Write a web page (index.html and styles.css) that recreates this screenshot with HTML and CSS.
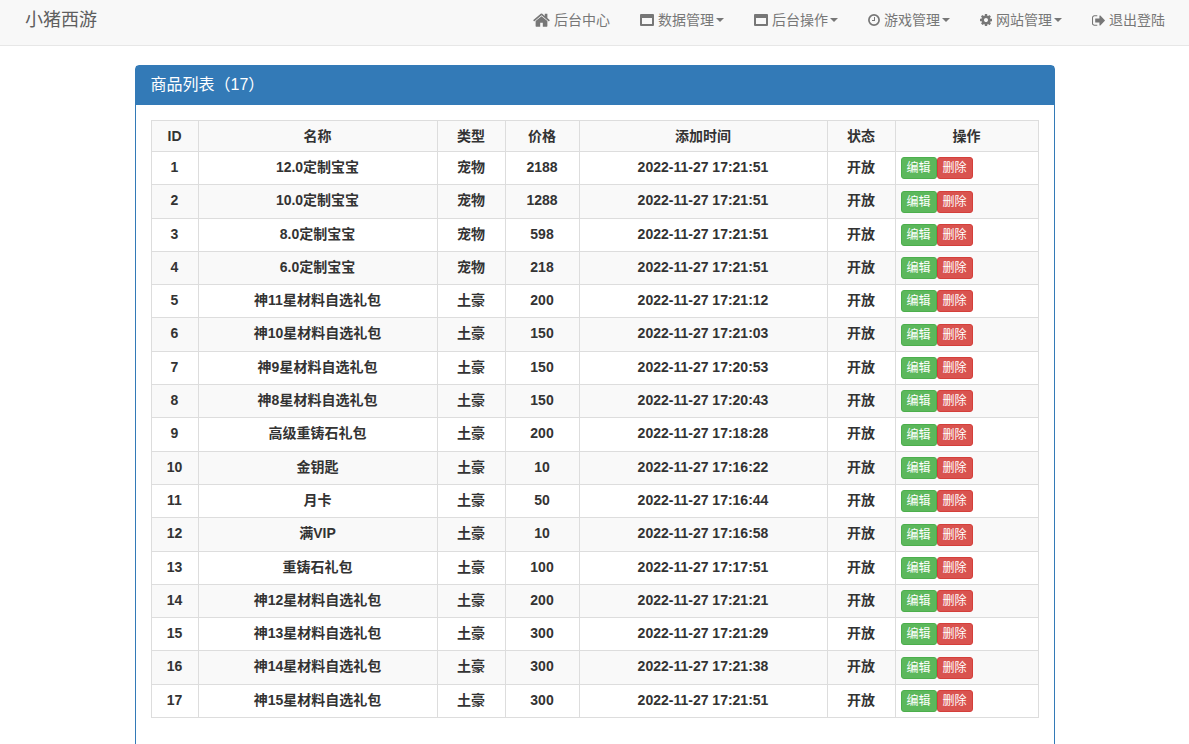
FILE: index.html
```html
<!DOCTYPE html>
<html lang="zh-CN">
<head>
<meta charset="utf-8">
<meta name="viewport" content="width=device-width, initial-scale=1">
<title>小猪西游</title>
<link rel="stylesheet" href="styles.css">
</head>
<body>
<svg class="sprite" aria-hidden="true">
  <symbol id="home" viewBox="0 224 1664 1312"><path d="M1408 992v480q0 26-19 45t-45 19h-384v-384h-256v384h-384q-26 0-45-19t-19-45v-480q0-1 .5-3t.5-3l575-474 575 474q1 2 1 6zm223-69l-62 74q-8 9-21 11h-3q-13 0-21-7l-692-577-692 577q-12 8-24 7-13-2-21-11l-62-74q-8-10-7-23.5t11-21.5l719-599q32-26 76-26t76 26l244 204v-195q0-14 9-23t23-9h192q14 0 23 9t9 23v408l219 182q10 8 11 21.5t-7 23.5z"/></symbol>
  <symbol id="window" viewBox="0 0 14 12"><path fill-rule="evenodd" d="M1 0h12q1 0 1 1v10q0 1-1 1h-12q-1 0-1-1v-10q0-1 1-1zM2 4v6h10v-6z"/></symbol>
  <symbol id="clock" viewBox="0 0 12 12"><circle cx="6" cy="6" r="5.1" fill="none" stroke="currentColor" stroke-width="1.7"/><path d="M6 3h1v4h-3v-1h2z"/></symbol>
  <symbol id="cog" viewBox="128 128 1536 1536"><path d="M1152 896q0-106-75-181t-181-75-181 75-75 181 75 181 181 75 181-75 75-181zm512-109v222q0 12-8 23t-20 13l-185 28q-19 54-39 91 35 50 107 138 10 12 10 25t-9 23q-27 37-99 108t-94 71q-12 0-26-9l-138-108q-44 23-91 38-16 136-29 186-7 28-36 28h-222q-14 0-24.500-8.500t-11.500-21.500l-28-184q-49-16-90-37l-141 107q-10 9-25 9-14 0-25-11-126-114-165-168-7-10-7-23 0-12 8-23 15-21 51-66.500t54-70.500q-27-50-41-99l-183-27q-13-2-21-12.500t-8-23.500v-222q0-12 8-23t19-13l186-28q14-46 39-92-40-57-107-138-10-12-10-24 0-10 9-23 26-36 98.500-107.500t94.500-71.500q13 0 26 10l138 107q44-23 91-38 16-136 29-186 7-28 36-28h222q14 0 24.500 8.500t11.500 21.500l28 184q49 16 90 37l142-107q9-9 24-9 13 0 25 10 129 119 165 170 7 8 7 22 0 12-8 23-15 21-51 66.500t-54 70.500q26 50 41 98l183 28q13 2 21 12.500t8 23.500z"/></symbol>
  <symbol id="signout" viewBox="64 256 1568 1280"><path d="M704 1440q0 4 1 20t.5 26.500-3 23.500-10 19.500-20.500 6.500h-320q-119 0-203.500-84.500t-84.500-203.500v-704q0-119 84.500-203.500t203.500-84.500h320q13 0 22.500 9.500t9.500 22.500q0 4 1 20t.5 26.500-3 23.500-10 19.500-20.500 6.500h-320q-66 0-113 47t-47 113v704q0 66 47 113t113 47h312l11.500 1 11.500 3 8 5.500 7 9 2 13.500zm928-544q0 26-19 45l-544 544q-19 19-45 19t-45-19-19-45v-288h-448q-26 0-45-19t-19-45v-384q0-26 19-45t45-19h448v-288q0-26 19-45t45-19 45 19l544 544q19 19 19 45z"/></symbol>
</svg>

<nav class="navbar">
  <a class="brand" href="#">小猪西游</a>
  <ul class="nav">
    <li><a href="#"><svg class="icon icon-lg"><use href="#home"/></svg>后台中心</a></li>
    <li><a href="#"><svg class="icon icon-window"><use href="#window"/></svg><span class="toggle">数据管理</span></a></li>
    <li><a href="#"><svg class="icon icon-window"><use href="#window"/></svg><span class="toggle">后台操作</span></a></li>
    <li><a href="#"><svg class="icon"><use href="#clock"/></svg><span class="toggle">游戏管理</span></a></li>
    <li><a href="#"><svg class="icon"><use href="#cog"/></svg><span class="toggle">网站管理</span></a></li>
    <li><a href="#"><svg class="icon icon-exit"><use href="#signout"/></svg>退出登陆</a></li>
  </ul>
</nav>

<main class="panel">
  <h1 class="panel-heading">商品列表（17）</h1>
  <div class="panel-body">
    <table class="table">
      <colgroup><col class="c-id"><col class="c-name"><col class="c-tag"><col class="c-price"><col class="c-time"><col class="c-tag"><col></colgroup>
      <thead>
        <tr><th>ID</th><th>名称</th><th>类型</th><th>价格</th><th>添加时间</th><th>状态</th><th>操作</th></tr>
      </thead>
      <tbody>
        <tr><th>1</th><th>12.0定制宝宝</th><th>宠物</th><th>2188</th><th>2022-11-27 17:21:51</th><th>开放</th><td><button class="btn edit">编辑</button><button class="btn del">删除</button></td></tr>
        <tr><th>2</th><th>10.0定制宝宝</th><th>宠物</th><th>1288</th><th>2022-11-27 17:21:51</th><th>开放</th><td><button class="btn edit">编辑</button><button class="btn del">删除</button></td></tr>
        <tr><th>3</th><th>8.0定制宝宝</th><th>宠物</th><th>598</th><th>2022-11-27 17:21:51</th><th>开放</th><td><button class="btn edit">编辑</button><button class="btn del">删除</button></td></tr>
        <tr><th>4</th><th>6.0定制宝宝</th><th>宠物</th><th>218</th><th>2022-11-27 17:21:51</th><th>开放</th><td><button class="btn edit">编辑</button><button class="btn del">删除</button></td></tr>
        <tr><th>5</th><th>神11星材料自选礼包</th><th>土豪</th><th>200</th><th>2022-11-27 17:21:12</th><th>开放</th><td><button class="btn edit">编辑</button><button class="btn del">删除</button></td></tr>
        <tr><th>6</th><th>神10星材料自选礼包</th><th>土豪</th><th>150</th><th>2022-11-27 17:21:03</th><th>开放</th><td><button class="btn edit">编辑</button><button class="btn del">删除</button></td></tr>
        <tr><th>7</th><th>神9星材料自选礼包</th><th>土豪</th><th>150</th><th>2022-11-27 17:20:53</th><th>开放</th><td><button class="btn edit">编辑</button><button class="btn del">删除</button></td></tr>
        <tr><th>8</th><th>神8星材料自选礼包</th><th>土豪</th><th>150</th><th>2022-11-27 17:20:43</th><th>开放</th><td><button class="btn edit">编辑</button><button class="btn del">删除</button></td></tr>
        <tr><th>9</th><th>高级重铸石礼包</th><th>土豪</th><th>200</th><th>2022-11-27 17:18:28</th><th>开放</th><td><button class="btn edit">编辑</button><button class="btn del">删除</button></td></tr>
        <tr><th>10</th><th>金钥匙</th><th>土豪</th><th>10</th><th>2022-11-27 17:16:22</th><th>开放</th><td><button class="btn edit">编辑</button><button class="btn del">删除</button></td></tr>
        <tr><th>11</th><th>月卡</th><th>土豪</th><th>50</th><th>2022-11-27 17:16:44</th><th>开放</th><td><button class="btn edit">编辑</button><button class="btn del">删除</button></td></tr>
        <tr><th>12</th><th>满VIP</th><th>土豪</th><th>10</th><th>2022-11-27 17:16:58</th><th>开放</th><td><button class="btn edit">编辑</button><button class="btn del">删除</button></td></tr>
        <tr><th>13</th><th>重铸石礼包</th><th>土豪</th><th>100</th><th>2022-11-27 17:17:51</th><th>开放</th><td><button class="btn edit">编辑</button><button class="btn del">删除</button></td></tr>
        <tr><th>14</th><th>神12星材料自选礼包</th><th>土豪</th><th>200</th><th>2022-11-27 17:21:21</th><th>开放</th><td><button class="btn edit">编辑</button><button class="btn del">删除</button></td></tr>
        <tr><th>15</th><th>神13星材料自选礼包</th><th>土豪</th><th>300</th><th>2022-11-27 17:21:29</th><th>开放</th><td><button class="btn edit">编辑</button><button class="btn del">删除</button></td></tr>
        <tr><th>16</th><th>神14星材料自选礼包</th><th>土豪</th><th>300</th><th>2022-11-27 17:21:38</th><th>开放</th><td><button class="btn edit">编辑</button><button class="btn del">删除</button></td></tr>
        <tr><th>17</th><th>神15星材料自选礼包</th><th>土豪</th><th>300</th><th>2022-11-27 17:21:51</th><th>开放</th><td><button class="btn edit">编辑</button><button class="btn del">删除</button></td></tr>
      </tbody>
    </table>
  </div>
</main>
</body>
</html>
```

FILE: styles.css
```css
* { box-sizing: border-box; }

body {
  margin: 0;
  background: #fff;
  color: #333;
  font: 14px/20px "Liberation Sans", "Noto Sans CJK SC", sans-serif;
}

.sprite { display: none; }

.navbar {
  display: flex;
  flex-wrap: wrap;
  justify-content: space-between;
  padding: 0 9px 5px 10px;
  margin-bottom: 19px;
  background: #f8f8f8;
  border-bottom: 1px solid #e7e7e7;
}

.navbar a {
  display: flex;
  align-items: center;
  gap: 4px;
  padding: 10px 15px;
  color: #777;
  text-decoration: none;
}

.navbar .brand {
  color: #5e5e5e;
  font-size: 18px;
}

.nav {
  display: flex;
  flex-wrap: wrap;
  margin: 0;
  padding: 0;
  list-style: none;
}

.icon {
  width: 12px;
  height: 12px;
  fill: currentColor;
}
.icon-lg { width: 17px; height: 14px; }
.icon-window { width: 14px; }
.icon-exit { width: 13px; height: 11px; }

.toggle {
  display: flex;
  align-items: center;
  gap: 2px;
}
.toggle::after {
  content: "";
  border-top: 4px solid;
  border-left: 4px solid transparent;
  border-right: 4px solid transparent;
}

.panel {
  max-width: 920px;
  margin: 0 auto 20px;
  border: 1px solid #337ab7;
  border-radius: 4px;
}

.panel-heading {
  margin: 0;
  padding: 9px 15px 10px;
  background: #337ab7;
  color: #fff;
  font-size: 16px;
  font-weight: 400;
}

.panel-body { padding: 15px; }

.table {
  width: 100%;
  margin-bottom: 20px;
  table-layout: fixed;
  border-collapse: collapse;
}
.table th,
.table td {
  padding: 5px;
  border: 1px solid #ddd;
  vertical-align: top;
}
.table td { font-weight: 700; }
.table thead tr,
.table tbody tr:nth-child(even) { background: #f9f9f9; }

.c-id { width: 47px; }
.c-name { width: 239px; }
.c-tag { width: 68px; }
.c-price { width: 74px; }
.c-time { width: 248px; }

.btn {
  padding: 1px 5px;
  border: 1px solid;
  border-radius: 3px;
  color: #fff;
  font: 12px/18px "Liberation Sans", "Noto Sans CJK SC", sans-serif;
  vertical-align: middle;
  cursor: pointer;
}
.edit { background: #5cb85c; border-color: #4cae4c; }
.del { background: #d9534f; border-color: #d43f3a; }
```
